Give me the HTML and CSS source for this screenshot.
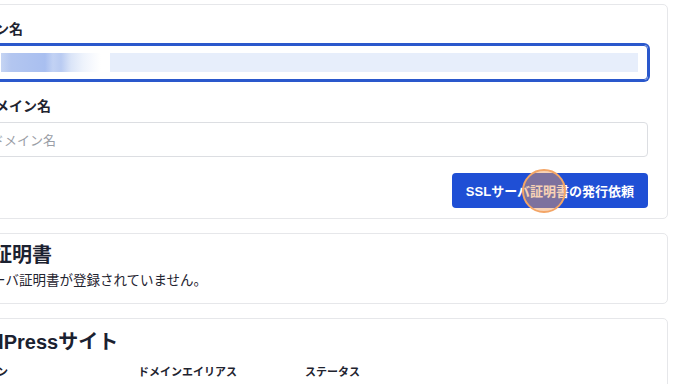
FILE: index.html
```html
<!DOCTYPE html>
<html lang="ja">
	<head>
		<meta charset="utf-8" />
		<title>SSL証明書</title>
		<link rel="stylesheet" href="styles.css">
	</head>

	<body>
		<div class="page">

			<!-- 発行依頼フォーム -->
			<section class="card card-form">
				<div class="field">
					<label class="field-label">ドメイン名</label>
					<div class="input input-focus">
						<span class="redacted-blur"></span>
						<span class="redacted-fill"></span>
					</div>
				</div>
				<div class="field">
					<label class="field-label">サブドメイン名</label>
					<div class="input">
						<span class="placeholder">サブドメイン名</span>
					</div>
				</div>
				<div class="actions">
					<button class="btn-primary">
						SSLサーバ証明書の発行依頼
						<span class="cursor-dot"></span>
					</button>
				</div>
			</section>

			<!-- 登録済み証明書 -->
			<section class="card card-list">
				<h2 class="card-title">SSL証明書</h2>
				<p class="card-text">SSLサーバ証明書が登録されていません。</p>
			</section>

			<!-- WordPress -->
			<section class="card card-list card-wp">
				<h2 class="card-title">WordPressサイト</h2>
				<div class="table-head">
					<div class="th">ドメイン</div>
					<div class="th">ドメインエイリアス</div>
					<div class="th">ステータス</div>
				</div>
			</section>

		</div>
	</body>
</html>
```

FILE: styles.css
```css
body {
  margin: 0;
  background: #ffffff;
  font-family: "Liberation Sans", "Noto Sans CJK JP", sans-serif;
  color: #1f2430;
}

.page {
  margin: 4px 20px 0 -67px;
  display: flex;
  flex-direction: column;
  gap: 14px;
}

.card {
  border: 1px solid #e6e7ea;
  border-radius: 5px;
  background: #fff;
  padding: 0 19px;
}
.card-form {
  padding-top: 14px;
  padding-bottom: 10px;
}
.card-list {
  padding-top: 9px;
  padding-bottom: 12px;
}
.card-wp {
  padding-top: 11px;
}

.field {
  display: flex;
  flex-direction: column;
  gap: 6px;
  margin-bottom: 16px;
}
.field-label {
  font-size: 14px;
  font-weight: bold;
  line-height: 20px;
}

.input {
  box-sizing: border-box;
  height: 35px;
  border: 1px solid #dcdee2;
  border-radius: 4px;
  display: flex;
  align-items: center;
  padding: 0 11px;
}
.input-focus {
  border: 1px solid #2a58cc;
  box-shadow: 0 0 0 2px #2a58cc;
  padding: 0 9px 0 47px;
  gap: 9px;
}
.redacted-blur {
  width: 100px;
  height: 19px;
  background: linear-gradient(to right,
    #c6d5f3 0px, #b3c6f0 10px, #a9bff0 44px, #c2d2f4 52px,
    #b9cbf2 60px, #dbe5f8 70px, #eef3fc 82px, #f8fafe 92px, #ffffff 100px);
}
.redacted-fill {
  flex: 1;
  height: 19px;
  background: #e7eefb;
}
.placeholder {
  font-size: 13px;
  color: #9a9ea6;
}

.actions {
  display: flex;
  justify-content: flex-end;
  margin-top: 1px;
}
.btn-primary {
  position: relative;
  height: 35px;
  padding: 0 14px;
  border: none;
  border-radius: 4px;
  background: #1f4fd5;
  color: #fff;
  font-family: inherit;
  font-size: 13px;
  font-weight: bold;
}
.cursor-dot {
  position: absolute;
  left: 70px;
  top: -4px;
  width: 40px;
  height: 40px;
  border: 2px solid #f3a566;
  border-radius: 50%;
  background: rgba(240, 155, 90, 0.45);
}

.card-title {
  margin: 0;
  font-size: 20px;
  font-weight: bold;
  line-height: 24px;
  color: #1b2130;
}
.card-text {
  margin: 4px 0 0;
  font-size: 13.5px;
  line-height: 20px;
}

.table-head {
  display: grid;
  grid-template-columns: 174px 167px 1fr;
  margin-top: 10px;
}
.th {
  padding-left: 11px;
  font-size: 11px;
  font-weight: bold;
  line-height: 16px;
}
```
